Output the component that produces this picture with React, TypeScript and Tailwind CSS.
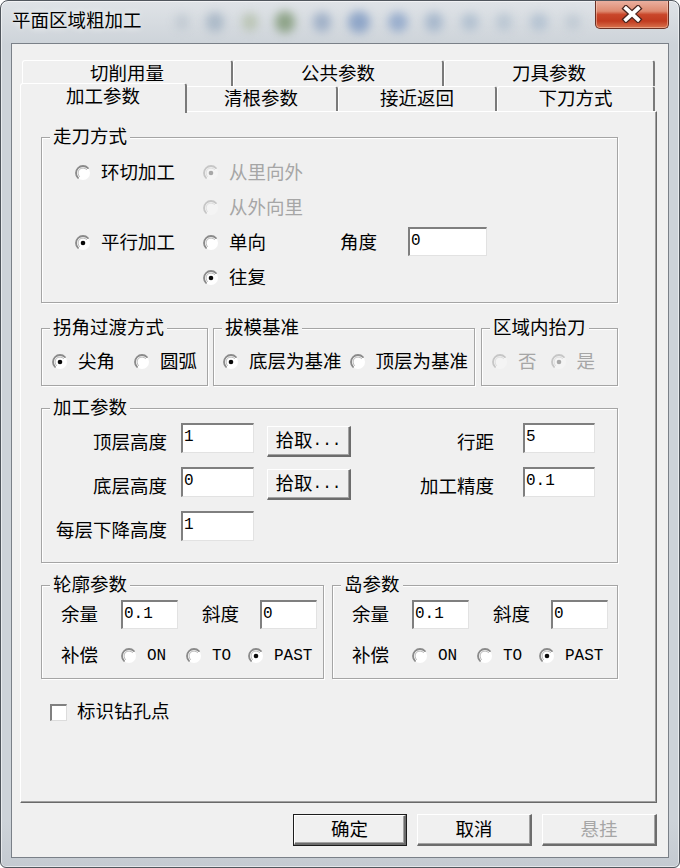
import React from "react";

type RadioProps = { checked?: boolean; disabled?: boolean };

function Radio({ checked = false, disabled = false }: RadioProps) {
  const outer = disabled ? "#c6c6c6" : "#8a8a8a";
  const inner = disabled ? "#dddddd" : "#b8b8b8";
  return (
    <svg width="16" height="16" viewBox="0 0 16 16" className="shrink-0">
      <circle cx="8" cy="8" r="7" fill={disabled ? "#f4f4f4" : "#ffffff"} />
      <path d="M3.05 12.95A7 7 0 0 1 12.95 3.05" fill="none" stroke={outer} strokeWidth="1.8" strokeLinecap="round" />
      <path d="M4.46 11.54A5 5 0 0 1 11.54 4.46" fill="none" stroke={inner} strokeWidth="1" strokeLinecap="round" />
      {checked && <circle cx="8" cy="8" r="2.3" fill={disabled ? "#a8a8a8" : "#0a0a0a"} />}
    </svg>
  );
}

function RadioItem({
  label,
  checked,
  disabled,
  mono,
  className = "",
}: {
  label: string;
  checked?: boolean;
  disabled?: boolean;
  mono?: boolean;
  className?: string;
}) {
  return (
    <div className={"flex items-center gap-[10px] h-[20px] " + className}>
      <Radio checked={checked} disabled={disabled} />
      <span
        className={
          (disabled ? "text-[#a6a6a6] " : "text-black ") +
          (mono
            ? "font-['Liberation_Mono',monospace] text-[16px] leading-[20px]"
            : "relative -top-[2px] leading-[20px]")
        }
      >
        {label}
      </span>
    </div>
  );
}

function Field({ value, className = "" }: { value: string; className?: string }) {
  return (
    <div
      className={
        "shrink-0 bg-white border-t-2 border-l-2 border-t-[#7f7f7f] border-l-[#7f7f7f] border-r border-b border-r-[#e2e2e2] border-b-[#e2e2e2] pl-[1px] pt-[3px] font-['Liberation_Mono',monospace] text-[16px] leading-[18px] text-black " +
        className
      }
    >
      {value}
    </div>
  );
}

function Group({
  legend,
  className = "",
  children,
}: {
  legend: string;
  className?: string;
  children?: React.ReactNode;
}) {
  return (
    <div
      className={
        "relative shrink-0 border border-[#a5a5a5] shadow-[1px_1px_0_#ffffff,inset_1px_1px_0_#ffffff] " + className
      }
    >
      <span className="absolute left-[8px] -top-[11px] px-[3px] pb-[4px] h-[20px] bg-[#f0f0f0] leading-[16px] whitespace-nowrap">
        {legend}
      </span>
      {children}
    </div>
  );
}

function Btn({
  children,
  className = "",
  primary,
  disabled,
}: {
  children: React.ReactNode;
  className?: string;
  primary?: boolean;
  disabled?: boolean;
}) {
  return (
    <div className={"shrink-0 bg-[#f0f0f0] " + (primary ? "border border-[#1c1c1c] " : "") + className}>
      <div
        className={
          "w-full h-full flex items-center justify-center pb-[4px] border-t border-l border-t-white border-l-white border-r-2 border-b-2 border-r-[#6c6c6c] border-b-[#6c6c6c] shadow-[inset_-1px_-1px_0_#a3a3a3] leading-[20px] " +
          (disabled ? "text-[#a6a6a6]" : "text-black")
        }
      >
        {children}
      </div>
    </div>
  );
}

function Tab({ label, className = "" }: { label: string; className?: string }) {
  return (
    <div
      className={
        "flex items-center justify-center bg-[#f0f0f0] border-t border-l border-t-white border-l-white border-r-2 border-r-[#7a7a7a] rounded-tl-[3px] rounded-tr-[3px] leading-[20px] " +
        className
      }
    >
      {label}
    </div>
  );
}

function Label({ children, className = "" }: { children: React.ReactNode; className?: string }) {
  return <span className={"shrink-0 leading-[20px] whitespace-nowrap " + className}>{children}</span>;
}

function ProfileGroup({ legend, className = "" }: { legend: string; className?: string }) {
  return (
    <Group legend={legend} className={"h-[94px] " + className}>
      <div className="pt-[14px] pl-[19px] flex flex-col">
        <div className="flex items-start h-[29px]">
          <Label className="w-[60px] mt-[3px]">余量</Label>
          <Field value="0.1" className="w-[57px] h-[29px]" />
          <Label className="ml-[24px] w-[58px] mt-[3px]">斜度</Label>
          <Field value="0" className="w-[57px] h-[29px]" />
        </div>
        <div className="flex items-center h-[20px] mt-[17px]">
          <Label className="w-[60px] relative -top-[2px]">补偿</Label>
          <RadioItem label="ON" mono className="w-[65px]" />
          <RadioItem label="TO" mono className="w-[62px]" />
          <RadioItem label="PAST" mono checked />
        </div>
      </div>
    </Group>
  );
}

export default function App() {
  return (
    <div className="w-[680px] h-[868px] bg-white font-['Noto_Sans_CJK_SC','Noto_Sans',sans-serif] text-[18.5px] text-black">
      <div className="w-[680px] h-[868px] flex flex-col rounded-t-[8px] rounded-b-[6px] border border-[#50565d] bg-[linear-gradient(180deg,#dfe3e7_0px,#cdd3d9_44px,#cdd3d9_820px,#c4cad1_100%)] shadow-[inset_0_0_0_1px_rgba(255,255,255,0.55)] overflow-hidden">
        {/* Title bar */}
        <div className="h-[42px] flex items-start shrink-0">
          <div className="pl-[11px] pt-[7px] w-[160px] leading-[22px] text-[18.5px] text-black whitespace-nowrap [text-shadow:0_0_6px_#ffffff]">
            平面区域粗加工
          </div>
          <div className="flex-1 h-[36px] mt-[3px] flex items-center justify-between pl-[14px] pr-[14px] blur-[5px] opacity-60">
            <div className="w-[14px] h-[16px] rounded-full bg-[#b4bfca]" />
            <div className="w-[18px] h-[20px] rounded-full bg-[#8fa3b8]" />
            <div className="w-[16px] h-[18px] rounded-full bg-[#a9b79a]" />
            <div className="w-[20px] h-[22px] rounded-full bg-[#5f7f4f]" />
            <div className="w-[18px] h-[20px] rounded-full bg-[#7d95b8]" />
            <div className="w-[22px] h-[22px] rounded-full bg-[#5f82b8]" />
            <div className="w-[20px] h-[20px] rounded-full bg-[#6f8fc0]" />
            <div className="w-[18px] h-[20px] rounded-full bg-[#8aa2c0]" />
            <div className="w-[18px] h-[18px] rounded-full bg-[#9bb0c6]" />
            <div className="w-[16px] h-[18px] rounded-full bg-[#a9bacb]" />
            <div className="w-[18px] h-[18px] rounded-full bg-[#9fb3c9]" />
            <div className="w-[16px] h-[16px] rounded-full bg-[#b3c0cd]" />
          </div>
          <div className="-mt-[1px] mr-[10px] w-[74px] h-[29px] flex items-center justify-center rounded-b-[5px] border border-t-0 border-[#6b3024] bg-[linear-gradient(180deg,#ebb3a4_0%,#de8a70_40%,#c9472b_52%,#c13b20_75%,#d9734e_100%)] shadow-[inset_0_0_0_1px_rgba(255,220,200,0.45)]">
            <svg width="22" height="18" viewBox="0 0 22 18">
              <path d="M5 3.5 L17 14.5 M17 3.5 L5 14.5" stroke="#4a2620" strokeWidth="6.4" strokeLinecap="square" />
              <path d="M5 3.5 L17 14.5 M17 3.5 L5 14.5" stroke="#ffffff" strokeWidth="3.8" strokeLinecap="square" />
            </svg>
          </div>
        </div>

        {/* Client area */}
        <div className="ml-[10px] mr-[10px] mb-[9px] h-[815px] border border-[#7a8088] bg-[#f0f0f0] flex flex-col">
          {/* Tab control */}
          <div className="pl-[8px] pt-[16px] flex flex-col">
            <div className="w-[637px] flex flex-col">
              <div className="flex items-start pl-[2px] h-[26px]">
                <Tab label="切削用量" className="w-[211px] h-[26px] pb-[4px]" />
                <Tab label="公共参数" className="w-[211px] h-[26px] pb-[4px]" />
                <Tab label="刀具参数" className="w-[211px] h-[26px] pb-[4px]" />
              </div>
              <div className="flex items-start pl-[2px] h-[25px]">
                <Tab label="加工参数" className="relative z-10 -ml-[2px] -mr-[2px] -mt-[3px] w-[167px] h-[30px] pb-[8px]" />
                <Tab label="清根参数" className="w-[153px] h-[25px] pb-[4px]" />
                <Tab label="接近返回" className="w-[159px] h-[25px] pb-[4px]" />
                <Tab label="下刀方式" className="w-[158px] h-[25px] pb-[4px]" />
              </div>
              {/* Panel */}
              <div className="w-[637px] h-[692px] border border-t-white border-l-white border-r-[#696969] border-b-[#696969] shadow-[inset_-1px_-1px_0_#a0a0a0] pl-[20px] flex flex-col">
                {/* 走刀方式 */}
                <Group legend="走刀方式" className="mt-[25px] w-[577px] h-[166px]">
                  <div className="pt-[17px] pl-[33px] flex flex-col">
                    <div className="flex items-center h-[35px]">
                      <RadioItem label="环切加工" className="w-[128px]" />
                      <RadioItem label="从里向外" checked disabled />
                    </div>
                    <div className="flex items-center h-[35px]">
                      <div className="w-[128px]" />
                      <RadioItem label="从外向里" disabled />
                    </div>
                    <div className="flex items-center h-[35px]">
                      <RadioItem label="平行加工" checked className="w-[128px]" />
                      <RadioItem label="单向" className="w-[137px]" />
                      <Label className="w-[68px] relative -top-[2px]">角度</Label>
                      <Field value="0" className="w-[79px] h-[29px] -mt-[3px]" />
                    </div>
                    <div className="flex items-center h-[35px]">
                      <div className="w-[128px]" />
                      <RadioItem label="往复" checked />
                    </div>
                  </div>
                </Group>

                {/* Row of three groups */}
                <div className="mt-[25px] flex w-[577px]">
                  <Group legend="拐角过渡方式" className="w-[167px] h-[58px]">
                    <div className="pt-[23px] pl-[10px] flex gap-[19px]">
                      <RadioItem label="尖角" checked />
                      <RadioItem label="圆弧" />
                    </div>
                  </Group>
                  <Group legend="拔模基准" className="ml-[5px] w-[262px] h-[58px]">
                    <div className="pt-[23px] pl-[9px] flex gap-[8px]">
                      <RadioItem label="底层为基准" checked />
                      <RadioItem label="顶层为基准" />
                    </div>
                  </Group>
                  <Group legend="区域内抬刀" className="ml-[6px] w-[137px] h-[58px]">
                    <div className="pt-[23px] pl-[10px] flex gap-[14px]">
                      <RadioItem label="否" disabled />
                      <RadioItem label="是" checked disabled />
                    </div>
                  </Group>
                </div>

                {/* 加工参数 */}
                <Group legend="加工参数" className="mt-[22px] w-[577px] h-[155px]">
                  <div className="pt-[14px] flex flex-col">
                    <div className="flex items-start h-[44px]">
                      <Label className="w-[125px] text-right mt-[3px] h-[30px] leading-[30px]">顶层高度</Label>
                      <Field value="1" className="ml-[14px] w-[73px] h-[30px]" />
                      <Btn className="ml-[13px] mt-[3px] w-[84px] h-[31px]">
                        <span>拾取</span>
                        <span className="font-['Liberation_Mono',monospace] text-[16px] relative top-[2px]">...</span>
                      </Btn>
                      <Label className="w-[143px] text-right mt-[3px] h-[30px] leading-[30px]">行距</Label>
                      <Field value="5" className="ml-[29px] w-[72px] h-[30px]" />
                    </div>
                    <div className="flex items-start h-[44px]">
                      <Label className="w-[125px] text-right mt-[3px] h-[30px] leading-[30px]">底层高度</Label>
                      <Field value="0" className="ml-[14px] w-[73px] h-[30px]" />
                      <Btn className="ml-[13px] mt-[2px] w-[84px] h-[31px]">
                        <span>拾取</span>
                        <span className="font-['Liberation_Mono',monospace] text-[16px] relative top-[2px]">...</span>
                      </Btn>
                      <Label className="w-[143px] text-right mt-[3px] h-[30px] leading-[30px]">加工精度</Label>
                      <Field value="0.1" className="ml-[29px] w-[72px] h-[30px]" />
                    </div>
                    <div className="flex items-start h-[44px]">
                      <Label className="w-[125px] text-right mt-[3px] h-[30px] leading-[30px]">每层下降高度</Label>
                      <Field value="1" className="ml-[14px] w-[73px] h-[30px]" />
                    </div>
                  </div>
                </Group>

                {/* 轮廓参数 / 岛参数 */}
                <div className="mt-[22px] flex w-[577px]">
                  <ProfileGroup legend="轮廓参数" className="w-[283px]" />
                  <ProfileGroup legend="岛参数" className="ml-[8px] w-[286px]" />
                </div>

                {/* checkbox */}
                <div className="mt-[24px] ml-[9px] flex items-center gap-[10px] h-[18px]">
                  <div className="w-[17px] h-[17px] bg-white border-t-2 border-l-2 border-t-[#808080] border-l-[#808080] border-r border-b border-r-[#dcdcdc] border-b-[#dcdcdc]" />
                  <Label className="relative -top-[2px]">标识钻孔点</Label>
                </div>
              </div>
            </div>
          </div>

          {/* Buttons */}
          <div className="mt-[11px] pr-[11px] flex justify-end gap-[10px]">
            <Btn primary className="w-[114px] h-[32px]">确定</Btn>
            <Btn className="w-[115px] h-[32px]">取消</Btn>
            <Btn disabled className="w-[115px] h-[32px]">悬挂</Btn>
          </div>
        </div>
      </div>
    </div>
  );
}
